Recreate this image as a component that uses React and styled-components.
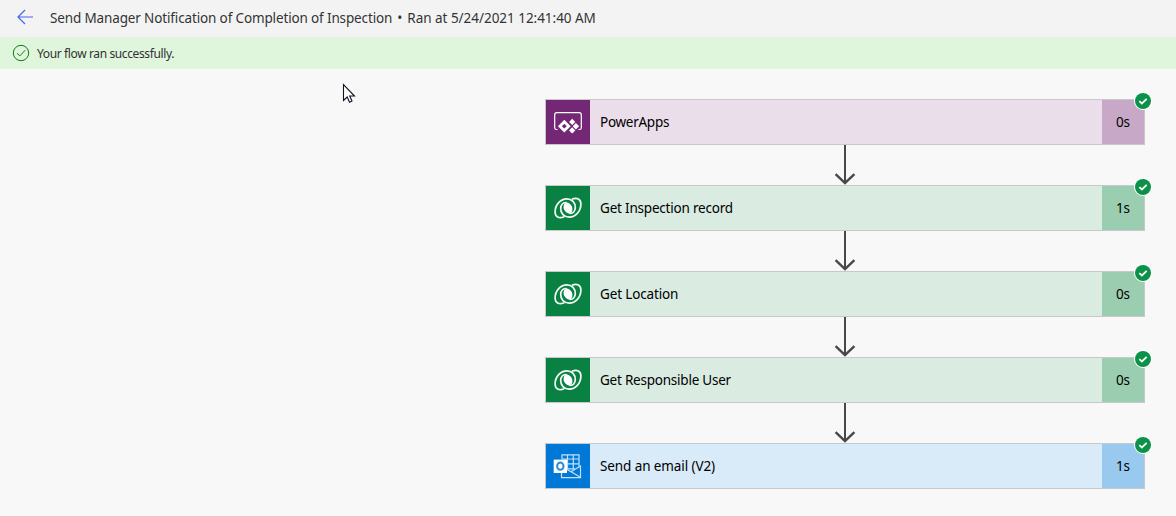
import React from "react";
import styled, { createGlobalStyle } from "styled-components";

const GlobalStyle = createGlobalStyle`
  * { box-sizing: border-box; }
  body {
    margin: 0;
    background: #f8f8f8;
    font-family: "Noto Sans", "Open Sans", sans-serif;
    color: #000;
  }
`;

const Page = styled.div`
  position: relative;
  height: 516px;
  overflow: hidden;
  background: #f8f8f8;
`;

const Header = styled.header`
  display: flex;
  align-items: center;
  height: 37px;
  padding-left: 17px;
  background: #f3f3f3;
`;

const BackButton = styled.button`
  display: flex;
  width: 17px;
  height: 16px;
  margin: 0 16px 3px 0;
  padding: 0;
  border: 0;
  background: none;
`;

const Title = styled.h1`
  display: flex;
  gap: 5px;
  margin: 0;
  padding-bottom: 1px;
  font-size: 13.5px;
  line-height: 20px;
  font-weight: 400;
  color: #333;
  white-space: nowrap;
`;

const TitlePart = styled.span`
  letter-spacing: ${(p) => p.$spacing}px;
`;

const Banner = styled.div`
  display: flex;
  align-items: center;
  gap: 7px;
  height: 32px;
  padding-left: 12px;
  background: #dff6dd;
  color: #323130;
  font-size: 12px;
  letter-spacing: -0.38px;
  white-space: nowrap;

  svg { flex: none; }
`;

const Flow = styled.main`
  display: flex;
  flex-direction: column;
  width: 600px;
  margin: 30px 0 0 545px;
`;

const Card = styled.div`
  position: relative;
  display: flex;
  height: 46px;
  border: 1px solid #c8c8c8;
  background: ${(p) => p.$tint};
`;

const IconTile = styled.div`
  width: 44px;
  height: 44px;
  background: ${(p) => p.$color};

  svg { display: block; }
`;

const Label = styled.div`
  flex: 1;
  padding-left: 10px;
  font-size: 13.5px;
  line-height: 44px;
  letter-spacing: ${(p) => p.$spacing}px;
`;

const Duration = styled.div`
  width: 42px;
  background: ${(p) => p.$color};
  text-align: center;
  font-size: 13.5px;
  line-height: 44px;
  letter-spacing: -0.2px;
`;

const Badge = styled.span`
  position: absolute;
  top: -8px;
  right: -8px;
  width: 18px;
  height: 18px;

  svg { display: block; }
`;

const Connector = styled.div`
  display: flex;
  justify-content: center;
  height: 40px;
`;

const Pointer = styled.svg`
  position: absolute;
  left: 342px;
  top: 83px;
`;

const BackArrow = () => (
  <svg width="17" height="16" viewBox="0 0 17 16" fill="none" stroke="#4169f0" strokeWidth="1.2">
    <path d="M16 8H1M8 1L1 8L8 15" />
  </svg>
);

const SuccessRing = () => (
  <svg width="18" height="18" viewBox="0 0 18 18" fill="none" stroke="#107c10" strokeWidth="1">
    <circle cx="9" cy="9" r="7.7" />
    <path d="M5 9.2L7.8 11.9L13.2 6.2" />
  </svg>
);

const CheckBadge = () => (
  <Badge>
    <svg width="18" height="18" viewBox="0 0 18 18">
      <circle cx="9" cy="9" r="9" fill="#fff" />
      <circle cx="9" cy="9" r="8" fill="#0a9348" />
      <path d="M5.3 9.1L7.9 11.5L12.7 6.9" fill="none" stroke="#fff" strokeWidth="1.8" />
    </svg>
  </Badge>
);

const DownArrow = () => (
  <Connector>
    <svg width="22" height="40" viewBox="0 0 22 40" fill="none" stroke="#484848" strokeWidth="2">
      <path d="M11 0V38" />
      <path d="M1.6 29.2L11 38.2L20.4 29.2" strokeWidth="2.4" />
    </svg>
  </Connector>
);

const PowerAppsIcon = () => (
  <svg width="44" height="44" viewBox="0 0 44 44" fill="none">
    <path
      d="M11.5 29.5H10.5Q8.7 29.5 8.7 27.7V15Q8.7 12.7 10.7 12.7H33.3Q35.3 12.7 35.3 15V27.7Q35.3 29.5 33.5 29.5H32.5"
      stroke="#fff"
      strokeWidth="1.2"
    />
    <path d="M18.3 21.8L22.7 26.2L18.3 30.6L13.9 26.2Z" stroke="#fff" strokeWidth="2.8" />
    <g fill="#fff">
      <path d="M26.2 18.800L29.300 21.900L26.200 25L23.100 21.900Z" />
      <path d="M29.900 23L33.100 26.200L29.900 29.400L26.700 26.200Z" />
      <path d="M26.200 27.300L29.300 30.400L26.200 33.500L23.100 30.400Z" />
    </g>
  </svg>
);

const swirl =
  "M17.6 31C13 32.8 9.100 30.800 9.100 26C9.100 18.500 14.700 12.800 20.800 12.800C26 12.800 29.500 16.800 29.300 21.800C29.100 25.300 27 27.600 24 27.400";

const DataverseIcon = () => (
  <svg width="44" height="44" viewBox="0 0 44 44" fill="none" stroke="#f2faf5" strokeWidth="1.7" strokeLinecap="round" strokeLinejoin="round">
    <path d={swirl} />
    <path d={swirl} transform="rotate(180 22 22)" />
    <ellipse cx="22" cy="22" rx="4.2" ry="5.600" transform="rotate(-25 22 22)" fill="#fff" stroke="none" />
  </svg>
);

const OutlookIcon = () => (
  <svg width="44" height="44" viewBox="0 0 44 44" fill="none" stroke="#c4e0f8" strokeWidth="1.2">
    <path d="M16 15V10.800H33V23M16 15H33M21 19.800H33M21.500 10.800V25M27.300 10.800V25M21 24.800H29" />
    <path d="M15.500 29V33.700H34.500V22L25 27.800L34.500 33.300" />
    <path d="M21 25.500L25 27.800" />
    <path d="M7.700 15.600H21V29H7.700Z" fill="#fff" stroke="none" />
    <ellipse cx="14.300" cy="22.200" rx="3.200" ry="3.600" stroke="#2a8ade" strokeWidth="2" />
  </svg>
);

const themes = {
  powerApps: { color: "#742774", tint: "#eadeea", time: "#c7a9c7", Icon: PowerAppsIcon },
  dataverse: { color: "#088142", tint: "#daebe2", time: "#9bcdb1", Icon: DataverseIcon },
  outlook: { color: "#0078d7", tint: "#d9eaf8", time: "#99c9ef", Icon: OutlookIcon },
};

const steps = [
  { label: "PowerApps", time: "0s", kind: "powerApps", spacing: -0.27 },
  { label: "Get Inspection record", time: "1s", kind: "dataverse", spacing: -0.2 },
  { label: "Get Location", time: "0s", kind: "dataverse", spacing: -0.14 },
  { label: "Get Responsible User", time: "0s", kind: "dataverse", spacing: -0.23 },
  { label: "Send an email (V2)", time: "1s", kind: "outlook", spacing: -0.1 },
];

const Step = ({ label, time, kind, spacing }) => {
  const { color, tint, time: timeColor, Icon } = themes[kind];
  return (
    <Card $tint={tint}>
      <IconTile $color={color}><Icon /></IconTile>
      <Label $spacing={spacing}>{label}</Label>
      <Duration $color={timeColor}>{time}</Duration>
      <CheckBadge />
    </Card>
  );
};

export default function App() {
  return (
    <Page>
      <GlobalStyle />
      <Header>
        <BackButton aria-label="Back"><BackArrow /></BackButton>
        <Title>
          <TitlePart $spacing={-0.14}>Send Manager Notification of Completion of Inspection</TitlePart>
          <TitlePart $spacing={0}>•</TitlePart>
          <TitlePart $spacing={-0.03}>Ran at 5/24/2021 12:41:40 AM</TitlePart>
        </Title>
      </Header>
      <Banner>
        <SuccessRing />
        <span>Your flow ran successfully.</span>
      </Banner>
      <Flow>
        {steps.map((step, i) => (
          <React.Fragment key={step.label}>
            {i > 0 && <DownArrow />}
            <Step {...step} />
          </React.Fragment>
        ))}
      </Flow>
      <Pointer width="14" height="21" viewBox="0 0 14 21">
        <path d="M1.5 1.5V17.5L5.2 14L7.6 19.2L10 18.1L7.7 13H12.5Z" fill="#fff" stroke="#111126" strokeWidth="1.1" />
      </Pointer>
    </Page>
  );
}
